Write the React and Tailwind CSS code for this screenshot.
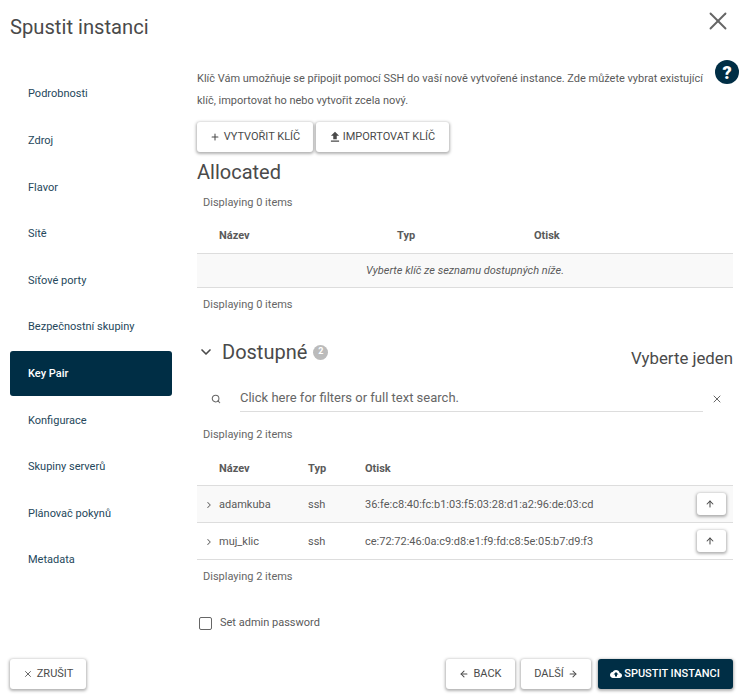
import React from "react";
import { X, Plus, ChevronDown, ChevronRight, Search, ArrowUp, ArrowLeft, ArrowRight } from "lucide-react";

const steps = ["Podrobnosti", "Zdroj", "Flavor", "Sítě", "Síťové porty", "Bezpečnostní skupiny", "Key Pair", "Konfigurace", "Skupiny serverů", "Plánovač pokynů", "Metadata"];

const keys = [
  { name: "adamkuba", type: "ssh", print: "36:fe:c8:40:fc:b1:03:f5:03:28:d1:a2:96:de:03:cd", shaded: true },
  { name: "muj_klic", type: "ssh", print: "ce:72:72:46:0a:c9:d8:e1:f9:fd:c8:5e:05:b7:d9:f3" },
];

const btn = "inline-flex items-center justify-center rounded-[3px] bg-white text-[11px] text-[#4a4a4a] shadow-[0_1px_3px_1px_rgba(0,0,0,0.3)]";

function Count({ n }) {
  return <div className="pl-1.5 text-[11px] leading-4 text-[#666]">Displaying {n} items</div>;
}

function HelpIcon() {
  return (
    <svg viewBox="0 0 24 24" className="h-6 w-6">
      <circle cx="12" cy="12" r="12" fill="#002e45" />
      <text x="12" y="18.5" textAnchor="middle" fontSize="18" fontWeight="900" fill="#fff" fontFamily="Roboto, sans-serif">?</text>
    </svg>
  );
}

function UploadIcon() {
  return (
    <svg viewBox="0 0 24 24" className="h-3.5 w-3.5" fill="currentColor">
      <path d="M9 16h6v-6h4l-7-7-7 7h4zm-4 2h14v2H5z" />
    </svg>
  );
}

function CloudIcon() {
  return (
    <svg viewBox="0 0 24 24" className="h-3 w-3" fill="currentColor">
      <path d="M19.35 10.04C18.67 6.59 15.64 4 12 4 9.11 4 6.6 5.64 5.35 8.04 2.34 8.36 0 10.91 0 14c0 3.31 2.69 6 6 6h13c2.76 0 5-2.24 5-5 0-2.64-2.05-4.78-4.65-4.96zM14 13v4h-4v-4H7l5-5 5 5h-3z" />
    </svg>
  );
}

export default function App() {
  return (
    <div className="flex h-[697px] w-[742px] flex-col overflow-hidden bg-white font-['Roboto',sans-serif] text-[#4a4a4a]">
      <div className="flex h-[58px] items-start justify-between pl-2.5 pr-[9px] pt-[15px]">
        <div className="text-[20.2px] leading-6 text-[#4a4a4a]">Spustit instanci</div>
        <X className="h-[30px] w-[30px] -translate-y-[9px] text-[#666]" strokeWidth={1.5} />
      </div>

      <div className="flex min-h-0 flex-1">
        <div className="ml-2.5 mt-[13.6px] w-[162px] shrink-0">
          {steps.map((s) => (
            <div
              key={s}
              className={
                s === "Key Pair"
                  ? "mb-[1.6px] flex h-[45px] items-center rounded-[3px] bg-[#002e45] pl-[18px] pt-[1px] text-[11px] font-medium text-white"
                  : "mb-[1.6px] flex h-[45px] items-center pl-[18px] pt-[1px] text-[11px] text-[#25475b]"
              }
            >
              {s}
            </div>
          ))}
        </div>

        <div className="ml-[25px] mr-[9px] min-w-0 flex-1">
          <div className="relative mt-[10px] pr-7 text-[10.98px] leading-[22px] text-[#5a5a5a]">
            Klíč Vám umožňuje se připojit pomocí SSH do vaší nově vytvořené instance. Zde můžete vybrat existující klíč, importovat ho nebo vytvořit zcela nový.
            <div className="absolute -right-[6px] -top-[8px]"><HelpIcon /></div>
          </div>
          <div className="mt-[10px] flex gap-[3px]">
            <button className={`${btn} h-[30px] w-[116px] gap-1`}><Plus className="h-2.5 w-2.5" strokeWidth={2.5} /> VYTVOŘIT KLÍČ</button>
            <button className={`${btn} h-[30px] w-[133px] gap-[1px] pr-[2px]`}><UploadIcon /> IMPORTOVAT KLÍČ</button>
          </div>

          <div className="mt-2 text-xl leading-6 text-[#4a4a4a]">Allocated</div>
          <div className="mt-[11px]"><Count n={0} /></div>

          <div className="mt-[12px] grid h-[27px] grid-cols-[178px_137px_1fr] items-center pl-[22px] text-[11px] font-bold text-[#5a5a5a]">
            <div>Název</div><div>Typ</div><div>Otisk</div>
          </div>
          <div className="mt-[3px] flex h-[35px] items-center justify-center border-y border-[#ddd] bg-[#f9f9f9] pt-[1px] text-[11px] italic text-[#5a5a5a]">
            Vyberte klíč ze seznamu dostupných níže.
          </div>
          <div className="mt-[9px]"><Count n={0} /></div>

          <div className="mt-[25px] flex h-7 items-center">
            <ChevronDown className="ml-[1px] h-4 w-4 text-[#4a4a4a]" strokeWidth={2.5} />
            <div className="ml-2 text-xl text-[#4a4a4a]">Dostupné</div>
            <div className="ml-[6px] flex h-[15px] w-[15px] items-center justify-center rounded-full bg-[#bbb] text-[9px] font-bold text-white">2</div>
            <div className="ml-auto mt-[13px] text-[16.8px] text-[#4a4a4a]">Vyberte jeden</div>
          </div>

          <div className="mt-[19px] flex h-[27px] items-center">
            <div className="flex w-[43px] justify-center pr-[6px]"><Search className="h-2.5 w-2.5 text-[#666]" strokeWidth={2.5} /></div>
            <div className="flex h-full flex-1 items-center border-b border-[#ddd] text-[13px] text-[#666]">Click here for filters or full text search.</div>
            <div className="flex w-[30px] justify-center pr-[2px]"><X className="h-3 w-3 text-[#666]" /></div>
          </div>

          <div className="mt-[15px]"><Count n={2} /></div>

          <div className="mt-[18px] grid h-[17px] grid-cols-[22px_89px_57px_1fr] items-center text-[11px] font-bold text-[#5a5a5a]">
            <div /><div>Název</div><div>Typ</div><div>Otisk</div>
          </div>
          <div className="mt-[7px] border-t border-[#ddd]">
            {keys.map((k) => (
              <div key={k.name} className={`grid h-[37px] grid-cols-[22px_89px_57px_1fr_auto] items-center border-b border-[#ddd] pr-[7px] pt-[2px] text-[11px] text-[#5a5a5a] ${k.shaded ? "bg-[#f9f9f9]" : "bg-white"}`}>
                <ChevronRight className="ml-[7px] h-2.5 w-2.5 text-[#666]" strokeWidth={2.5} />
                <div>{k.name}</div>
                <div>{k.type}</div>
                <div>{k.print}</div>
                <button className={`${btn} -mt-[2px] h-[22px] w-[29px] pr-[3px]`}><ArrowUp className="h-2.5 w-2.5" strokeWidth={2.5} /></button>
              </div>
            ))}
          </div>
          <div className="mt-[9px]"><Count n={2} /></div>

          <div className="mt-[30px] flex items-center gap-2 pl-[2px] text-[11px] text-[#5a5a5a]">
            <div className="h-[13px] w-[13px] rounded-[2px] border-[1.5px] border-[#666]" />
            Set admin password
          </div>
        </div>
      </div>

      <div className="mb-2 flex h-[30px] items-center pl-2.5 pr-[9px]">
        <button className={`${btn} h-[30px] w-[76px] gap-1`}><X className="h-2.5 w-2.5" /> ZRUŠIT</button>
        <button className={`${btn} ml-auto h-[30px] w-[69px] gap-1`}><ArrowLeft className="h-2.5 w-2.5" strokeWidth={2.5} /> BACK</button>
        <button className={`${btn} ml-[6px] h-[30px] w-[70px] gap-1`}>DALŠÍ <ArrowRight className="h-2.5 w-2.5" strokeWidth={2.5} /></button>
        <button className={`${btn} ml-[7px] h-[30px] w-[135px] gap-[2px] !bg-[#002e45] pr-[1px] font-medium !text-white`}><CloudIcon /> SPUSTIT INSTANCI</button>
      </div>
    </div>
  );
}
